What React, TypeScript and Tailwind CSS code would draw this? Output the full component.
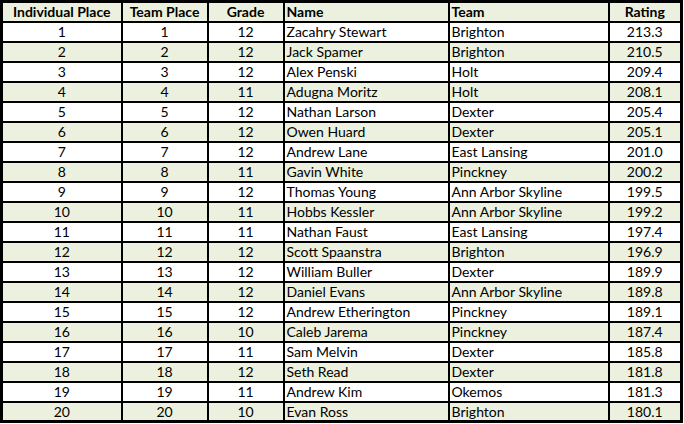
const rows: [number, number, number, string, string, string][] = [
  [1, 1, 12, "Zacahry Stewart", "Brighton", "213.3"],
  [2, 2, 12, "Jack Spamer", "Brighton", "210.5"],
  [3, 3, 12, "Alex Penski", "Holt", "209.4"],
  [4, 4, 11, "Adugna Moritz", "Holt", "208.1"],
  [5, 5, 12, "Nathan Larson", "Dexter", "205.4"],
  [6, 6, 12, "Owen Huard", "Dexter", "205.1"],
  [7, 7, 12, "Andrew Lane", "East Lansing", "201.0"],
  [8, 8, 11, "Gavin White", "Pinckney", "200.2"],
  [9, 9, 12, "Thomas Young", "Ann Arbor Skyline", "199.5"],
  [10, 10, 11, "Hobbs Kessler", "Ann Arbor Skyline", "199.2"],
  [11, 11, 11, "Nathan Faust", "East Lansing", "197.4"],
  [12, 12, 12, "Scott Spaanstra", "Brighton", "196.9"],
  [13, 13, 12, "William Buller", "Dexter", "189.9"],
  [14, 14, 12, "Daniel Evans", "Ann Arbor Skyline", "189.8"],
  [15, 15, 12, "Andrew Etherington", "Pinckney", "189.1"],
  [16, 16, 10, "Caleb Jarema", "Pinckney", "187.4"],
  [17, 17, 11, "Sam Melvin", "Dexter", "185.8"],
  [18, 18, 12, "Seth Read", "Dexter", "181.8"],
  [19, 19, 11, "Andrew Kim", "Okemos", "181.3"],
  [20, 20, 10, "Evan Ross", "Brighton", "180.1"],
];

const cell = "border-2 border-black h-5 p-0 pt-px leading-none";

export default function App() {
  return (
    <div className="w-[684px] h-[424px] bg-white">
      <table
        className="table-fixed border-collapse border-[3px] border-black text-[14px] text-black w-[682px]"
        style={{ fontFamily: "Lato, 'Open Sans', sans-serif" }}
      >
        <colgroup>
          <col className="w-[120px]" />
          <col className="w-[86px]" />
          <col className="w-[76px]" />
          <col className="w-[165px]" />
          <col className="w-[160px]" />
          <col className="w-[73px]" />
        </colgroup>
        <thead>
          <tr className="bg-[#ebf1de] font-bold">
            <th className={`${cell} text-center`}>Individual Place</th>
            <th className={`${cell} text-center`}>Team Place</th>
            <th className={`${cell} text-center`}>Grade</th>
            <th className={`${cell} text-left pl-[2px]`}>Name</th>
            <th className={`${cell} text-left pl-[2px]`}>Team</th>
            <th className={`${cell} text-center`}>Rating</th>
          </tr>
        </thead>
        <tbody>
          {rows.map((r, i) => (
            <tr key={i} className={i % 2 === 1 ? "bg-[#ebf1de]" : "bg-white"}>
              <td className={`${cell} text-center`}>{r[0]}</td>
              <td className={`${cell} text-center`}>{r[1]}</td>
              <td className={`${cell} text-center`}>{r[2]}</td>
              <td className={`${cell} text-left pl-[2px]`}>{r[3]}</td>
              <td className={`${cell} text-left pl-[2px]`}>{r[4]}</td>
              <td className={`${cell} text-center`}>{r[5]}</td>
            </tr>
          ))}
        </tbody>
      </table>
    </div>
  );
}
